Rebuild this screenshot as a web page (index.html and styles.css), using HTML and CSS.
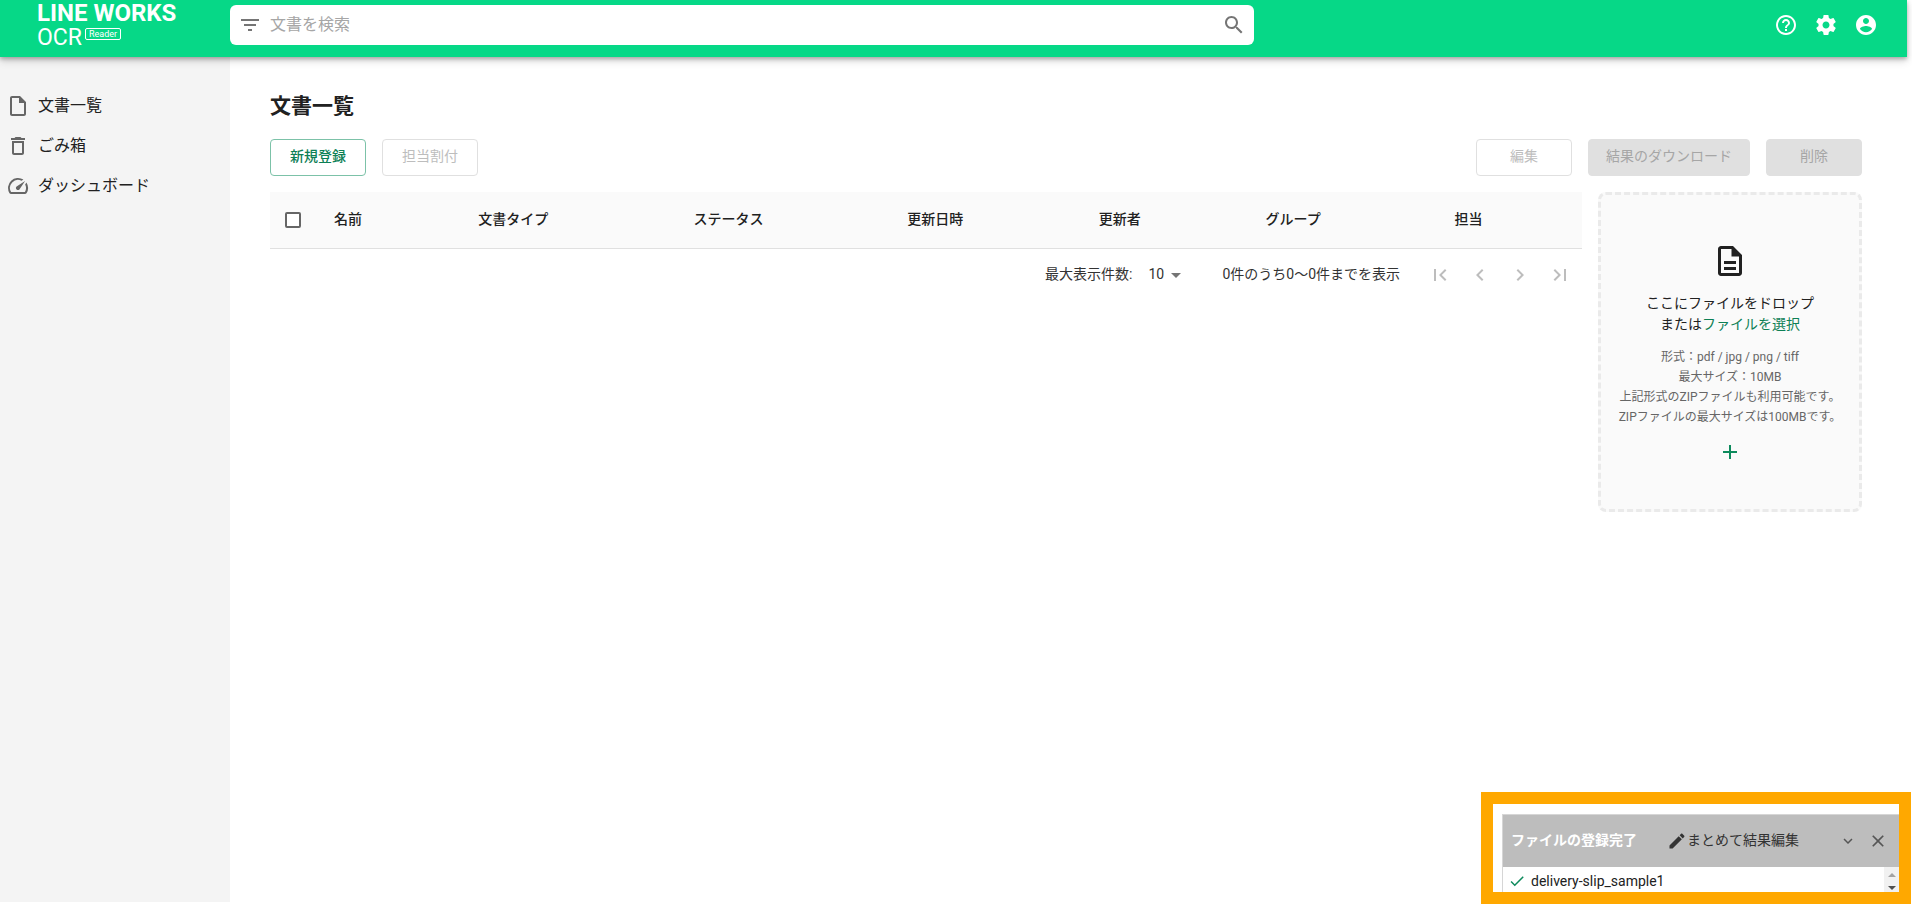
FILE: index.html
```html
<!DOCTYPE html>
<html lang="ja">
<head>
<meta charset="utf-8">
<meta name="viewport" content="width=device-width, initial-scale=1">
<title>文書一覧</title>
<link rel="stylesheet" href="styles.css">
</head>
<body>
<div class="app">
  <header class="topbar">
    <a class="logo" href="#">
      <span class="logo-main">LINE WORKS</span>
      <span class="logo-sub"><span class="logo-ocr">OCR</span><span class="logo-badge">Reader</span></span>
    </a>
    <form class="search" role="search">
      <button class="icon-btn" type="button" aria-label="絞り込み"><svg class="icon" viewBox="0 0 24 24"><path d="M10 18h4v-2h-4v2zM3 6v2h18V6H3zm3 7h12v-2H6v2z"/></svg></button>
      <input class="search-input" type="text" placeholder="文書を検索" aria-label="文書を検索">
      <button class="icon-btn" type="submit" aria-label="検索"><svg class="icon" viewBox="0 0 24 24"><path d="M15.5 14h-.79l-.28-.27C15.41 12.59 16 11.11 16 9.5 16 5.91 13.09 3 9.5 3S3 5.91 3 9.5 5.91 16 9.5 16c1.61 0 3.09-.59 4.23-1.57l.27.28v.79l5 4.99L20.49 19l-4.99-5zm-6 0C7.01 14 5 11.99 5 9.5S7.01 5 9.5 5 14 7.01 14 9.5 11.99 14 9.5 14z"/></svg></button>
    </form>
    <nav class="top-actions">
      <button class="icon-btn" type="button" aria-label="ヘルプ"><svg class="icon" viewBox="0 0 24 24"><path d="M11 18h2v-2h-2v2zm1-16C6.48 2 2 6.48 2 12s4.48 10 10 10 10-4.48 10-10S17.52 2 12 2zm0 18c-4.41 0-8-3.59-8-8s3.59-8 8-8 8 3.59 8 8-3.59 8-8 8zm0-14c-2.21 0-4 1.79-4 4h2c0-1.1.9-2 2-2s2 .9 2 2c0 2-3 1.75-3 5h2c0-2.25 3-2.5 3-5 0-2.21-1.79-4-4-4z"/></svg></button>
      <button class="icon-btn" type="button" aria-label="設定"><svg class="icon" viewBox="0 0 24 24"><path d="M19.43 12.98c.04-.32.07-.64.07-.98s-.03-.66-.07-.98l2.11-1.65c.19-.15.24-.42.12-.64l-2-3.46c-.12-.22-.39-.3-.61-.22l-2.49 1c-.52-.4-1.08-.73-1.69-.98l-.38-2.65C14.46 2.18 14.25 2 14 2h-4c-.25 0-.46.18-.49.42l-.38 2.65c-.61.25-1.17.59-1.69.98l-2.49-1c-.23-.09-.49 0-.61.22l-2 3.46c-.13.22-.07.49.12.64l2.11 1.65c-.04.32-.07.65-.07.98s.03.66.07.98l-2.11 1.65c-.19.15-.24.42-.12.64l2 3.46c.12.22.39.3.61.22l2.49-1c.52.4 1.08.73 1.69.98l.38 2.65c.03.24.24.42.49.42h4c.25 0 .46-.18.49-.42l.38-2.65c.61-.25 1.17-.59 1.69-.98l2.49 1c.23.09.49 0 .61-.22l2-3.46c.12-.22.07-.49-.12-.64l-2.11-1.65zM12 15.5c-1.93 0-3.5-1.57-3.5-3.5s1.57-3.5 3.5-3.5 3.5 1.57 3.5 3.5-1.57 3.5-3.5 3.5z"/></svg></button>
      <button class="icon-btn" type="button" aria-label="アカウント"><svg class="icon" viewBox="0 0 24 24"><path d="M12 2C6.48 2 2 6.48 2 12s4.48 10 10 10 10-4.48 10-10S17.52 2 12 2zm0 3c1.66 0 3 1.34 3 3s-1.34 3-3 3-3-1.34-3-3 1.34-3 3-3zm0 14.2c-2.5 0-4.71-1.28-6-3.22.03-1.99 4-3.08 6-3.08 1.99 0 5.97 1.09 6 3.08-1.29 1.94-3.5 3.22-6 3.22z"/></svg></button>
    </nav>
  </header>

  <div class="body">
    <nav class="sidebar">
      <a class="side-link" href="#"><svg class="icon" viewBox="0 0 24 24"><path d="M14 2H6c-1.1 0-2 .9-2 2v16c0 1.1.9 2 2 2h12c1.1 0 2-.9 2-2V8l-6-6zM6 20V4h7v5h5v11H6z"/></svg><span>文書一覧</span></a>
      <a class="side-link" href="#"><svg class="icon" viewBox="0 0 24 24"><path d="M6 19c0 1.1.9 2 2 2h8c1.1 0 2-.9 2-2V7H6v12zM8 9h8v10H8V9zm7.5-5l-1-1h-5l-1 1H5v2h14V4z"/></svg><span>ごみ箱</span></a>
      <a class="side-link" href="#"><svg class="icon" viewBox="0 0 24 24"><path d="M20.38 8.57l-1.23 1.85a8 8 0 0 1-.22 7.58H5.07A8 8 0 0 1 15.58 6.85l1.85-1.23A10 10 0 0 0 3.35 19a2 2 0 0 0 1.72 1h13.85a2 2 0 0 0 1.74-1 10 10 0 0 0-.27-10.44zm-9.79 6.84a2 2 0 0 0 2.83 0l5.66-8.49-8.49 5.66a2 2 0 0 0 0 2.83z"/></svg><span>ダッシュボード</span></a>
    </nav>

    <main class="main">
      <h1 class="title">文書一覧</h1>
      <div class="toolbar">
        <button class="btn btn-primary" type="button">新規登録</button>
        <button class="btn btn-outline" type="button" disabled>担当割付</button>
        <span class="spacer"></span>
        <button class="btn btn-outline" type="button" disabled>編集</button>
        <button class="btn btn-filled" type="button" disabled>結果のダウンロード</button>
        <button class="btn btn-filled" type="button" disabled>削除</button>
      </div>

      <div class="content">
        <section class="list">
          <table class="docs">
            <colgroup>
              <col class="c-check"><col class="c-name"><col class="c-type"><col class="c-status"><col class="c-date"><col class="c-user"><col class="c-group"><col class="c-owner">
            </colgroup>
            <thead>
              <tr>
                <th class="check-cell"><input class="checkbox" type="checkbox" aria-label="すべて選択"></th>
                <th>名前</th>
                <th>文書タイプ</th>
                <th>ステータス</th>
                <th>更新日時</th>
                <th>更新者</th>
                <th>グループ</th>
                <th>担当</th>
              </tr>
            </thead>
          </table>
          <div class="pager">
            <label for="rows">最大表示件数:</label>
            <span class="select-wrap">
              <select id="rows" class="select"><option>10</option><option>25</option><option>50</option></select>
              <svg class="icon select-arrow" viewBox="0 0 24 24"><path d="M7 10l5 5 5-5z"/></svg>
            </span>
            <span class="range">0件のうち0～0件までを表示</span>
            <div class="pages">
              <button class="icon-btn page-btn" type="button" disabled aria-label="最初"><svg class="icon" viewBox="0 0 24 24"><path d="M18.41 16.59L13.82 12l4.59-4.59L17 6l-6 6 6 6zM6 6h2v12H6z"/></svg></button>
              <button class="icon-btn page-btn" type="button" disabled aria-label="前へ"><svg class="icon" viewBox="0 0 24 24"><path d="M15.41 7.41L14 6l-6 6 6 6 1.41-1.41L10.83 12z"/></svg></button>
              <button class="icon-btn page-btn" type="button" disabled aria-label="次へ"><svg class="icon" viewBox="0 0 24 24"><path d="M10 6L8.590 7.410 13.170 12l-4.580 4.590L10 18l6-6z"/></svg></button>
              <button class="icon-btn page-btn" type="button" disabled aria-label="最後"><svg class="icon" viewBox="0 0 24 24"><path d="M5.590 7.410L10.180 12l-4.590 4.590L7 18l6-6-6-6zM16 6h2v12h-2z"/></svg></button>
            </div>
          </div>
        </section>

        <aside class="dropzone">
          <svg class="icon drop-icon" viewBox="0 0 24 24"><path d="M8 16h8v2H8zm0-4h8v2H8zm6-10H6c-1.1 0-2 .9-2 2v16c0 1.1.89 2 1.990 2H18c1.1 0 2-.9 2-2V8l-6-6zm4 18H6V4h7v5h5v11z"/></svg>
          <p class="drop-text">ここにファイルをドロップ<br>または<a class="pick" href="#">ファイルを選択</a></p>
          <p class="drop-note">形式：pdf / jpg / png / tiff<br>最大サイズ：10MB<br>上記形式のZIPファイルも利用可能です。<br>ZIPファイルの最大サイズは100MBです。</p>
          <button class="icon-btn add" type="button" aria-label="追加"><svg class="icon" viewBox="0 0 24 24"><path d="M19 13h-6v6h-2v-6H5v-2h6V5h2v6h6v2z"/></svg></button>
        </aside>
      </div>
    </main>
  </div>

  <section class="callout">
    <div class="panel">
      <div class="panel-head">
        <strong class="panel-title">ファイルの登録完了</strong>
        <button class="panel-edit" type="button"><svg class="icon icon-s" viewBox="0 0 24 24"><path d="M3 17.250V21h3.750L17.810 9.940l-3.750-3.750L3 17.250zM20.710 7.040c.39-.39.39-1.020 0-1.410l-2.340-2.340c-.39-.39-1.020-.39-1.410 0l-1.830 1.830 3.750 3.750 1.830-1.830z"/></svg><span>まとめて結果編集</span></button>
        <button class="icon-btn panel-btn" type="button" aria-label="折りたたむ"><svg class="icon icon-c" viewBox="0 0 24 24"><path d="M16.590 8.590L12 13.170 7.410 8.590 6 10l6 6 6-6z"/></svg></button>
        <button class="icon-btn panel-btn" type="button" aria-label="閉じる"><svg class="icon icon-s" viewBox="0 0 24 24"><path d="M19 6.410L17.590 5 12 10.590 6.410 5 5 6.410 10.590 12 5 17.590 6.410 19 12 13.410 17.590 19 19 17.590 13.410 12z"/></svg></button>
      </div>
      <div class="panel-body">
        <div class="file"><svg class="icon check" viewBox="0 0 24 24"><path d="M9 16.170L4.830 12l-1.420 1.410L9 19 21 7l-1.410-1.410z"/></svg><span>delivery-slip_sample1</span></div>
        <div class="scroll" aria-hidden="true"><span class="up"></span><span class="down"></span></div>
      </div>
    </div>
  </section>
</div>
</body>
</html>
```

FILE: styles.css
```css
* { box-sizing: border-box; }

body {
  margin: 0;
  background: #fff;
  color: #212121;
  font-family: Roboto, "Noto Sans CJK JP", sans-serif;
  font-size: 14px;
  line-height: 20px;
}

button, input, select { font: inherit; color: inherit; margin: 0; }
button { border: 0; background: none; padding: 0; }
a { color: inherit; text-decoration: none; }
p, h1 { margin: 0; }

.icon { width: 24px; height: 24px; fill: currentColor; display: block; flex: none; }
.icon-btn { display: flex; align-items: center; justify-content: center; flex: none; }

.app {
  position: relative;
  min-height: 100vh;
  display: flex;
  flex-direction: column;
  padding: 0 5px 3px 0;
}

/* top bar */
.topbar {
  position: relative;
  z-index: 1;
  height: 57px;
  display: flex;
  align-items: flex-start;
  background: #06d887;
  color: #fff;
  box-shadow: 0 2px 4px rgba(0, 0, 0, .25), 0 4px 8px rgba(0, 0, 0, .15);
}
.logo { width: 230px; padding: 1px 0 0 37px; flex: none; display: flex; flex-direction: column; }
.logo-main { font-weight: 700; font-size: 24px; line-height: 25px; white-space: nowrap; }
.logo-sub { display: flex; align-items: flex-start; gap: 3px; }
.logo-ocr { font-weight: 400; font-size: 23px; line-height: 24px; }
.logo-badge {
  margin-top: 2px;
  border: 1px solid #fff;
  border-radius: 2px;
  padding: 0 3px;
  font-size: 9px;
  line-height: 10px;
}
.search {
  width: 1024px;
  height: 40px;
  margin: 5px 0 0;
  padding: 0 8px;
  display: flex;
  align-items: center;
  gap: 8px;
  background: #fff;
  border-radius: 6px;
  color: #757575;
}
.search-input { flex: 1; min-width: 0; border: 0; padding: 0; outline: 0; background: none; font-size: 16px; }
.search-input::placeholder { color: #a6a6a6; opacity: 1; }
.top-actions { margin-left: auto; padding: 13px 29px 0 0; display: flex; gap: 16px; }

/* layout */
.body { flex: 1; display: flex; }
.sidebar { width: 230px; flex: none; padding-top: 29px; background: #f4f4f4; }
.side-link { display: flex; align-items: center; gap: 8px; height: 40px; padding-left: 6px; font-size: 16px; }
.side-link .icon { color: #666; }
.main { flex: 1; min-width: 0; padding: 33px 45px 0 40px; }
.title { font-size: 21px; line-height: 32px; font-weight: 700; }

/* buttons */
.toolbar { display: flex; gap: 16px; margin-top: 17px; }
.spacer { flex: 1; }
.btn {
  min-width: 96px;
  height: 37px;
  padding: 0 17px 4px;
  border: 1px solid #e0e0e0;
  border-radius: 4px;
  font-weight: 500;
}
.btn-primary { color: #0d8055; border-color: #7cc2a8; }
.btn-outline { color: #bdbdbd; font-weight: 400; }
.btn-filled { background: #e0e0e0; color: #a6a6a6; font-weight: 400; }

/* table */
.content { display: flex; align-items: flex-start; gap: 16px; margin-top: 16px; }
.list { flex: 1; min-width: 0; }
.docs { width: 100%; table-layout: fixed; border-collapse: separate; border-spacing: 0; }
.docs th {
  height: 57px;
  padding: 0 16px 3px;
  background: #fafafa;
  border-bottom: 1px solid #e0e0e0;
  text-align: left;
  font-weight: 500;
}
.docs .check-cell { padding: 0 0 0 15px; }
.c-check { width: 48px; }
.c-name { width: 11%; }
.c-type { width: 16.4%; }
.c-status { width: 16.3%; }
.c-date { width: 14.6%; }
.c-user { width: 12.7%; }
.c-group { width: 14.4%; }
.checkbox {
  appearance: none;
  display: block;
  width: 16px;
  height: 16px;
  border: 2px solid #666;
  border-radius: 2px;
  background: #fff;
}

.pager { display: flex; align-items: center; justify-content: flex-end; height: 52px; padding-right: 2px; color: #333; }
.pager label, .range, .select { padding-bottom: 2px; }
.select-wrap { display: flex; align-items: center; position: relative; margin-left: 16px; }
.select { appearance: none; border: 0; background: none; padding: 0 24px 2px 0; width: 40px; }
.select-arrow { position: absolute; right: 0; color: #757575; pointer-events: none; }
.range { margin-left: 34px; }
.pages { display: flex; margin-left: 20px; }
.page-btn { width: 40px; height: 40px; color: #bdbdbd; }

/* drop area */
.dropzone {
  width: 264px;
  min-height: 320px;
  flex: none;
  display: flex;
  flex-direction: column;
  align-items: center;
  padding-top: 48px;
  background: #fafafa;
  border: 3px dashed #eaeaea;
  border-radius: 8px;
  text-align: center;
}
.drop-icon { width: 36px; height: 36px; }
.drop-text { margin-top: 14px; line-height: 21px; }
.pick { color: #0d8055; }
.drop-note { margin-top: 12px; font-size: 12px; line-height: 20px; color: #666; white-space: nowrap; }
.add { margin-top: 13px; color: #0d8a5c; }

/* upload result */
.callout {
  position: absolute;
  right: 1px;
  bottom: 1px;
  width: 430px;
  border: 12px solid #ffa800;
  background: #fff;
  padding: 10px 0 0 9px;
}
.panel { border: 1px solid #d6d6d6; border-width: 1px 0 0 1px; }
.panel-head { display: flex; align-items: center; height: 52px; padding: 0 10px 0 8px; background: #bdbdbd; color: #333; }
.panel-title { color: #fff; font-weight: 700; padding-bottom: 2px; }
.panel-edit { display: flex; align-items: center; margin: 0 auto; }
.panel-edit span { padding-bottom: 2px; }
.icon-s { width: 20px; height: 20px; }
.icon-c { width: 18px; height: 18px; }
.panel-btn { width: 22px; height: 22px; margin-left: 8px; color: #555; }
.panel-body { display: flex; justify-content: space-between; height: 25px; }
.file { display: flex; align-items: center; gap: 5px; padding: 3px 0 0 5px; }
.check { width: 18px; height: 18px; color: #0d8a5c; }
.scroll { width: 15px; background: #f1f1f1; display: flex; flex-direction: column; align-items: center; justify-content: space-between; padding: 6px 0 2px; }
.up, .down { border: 4px solid transparent; border-top-width: 0; border-bottom: 4px solid #a3a3a3; }
.down { border-bottom-width: 0; border-top: 4px solid #505050; }
```
